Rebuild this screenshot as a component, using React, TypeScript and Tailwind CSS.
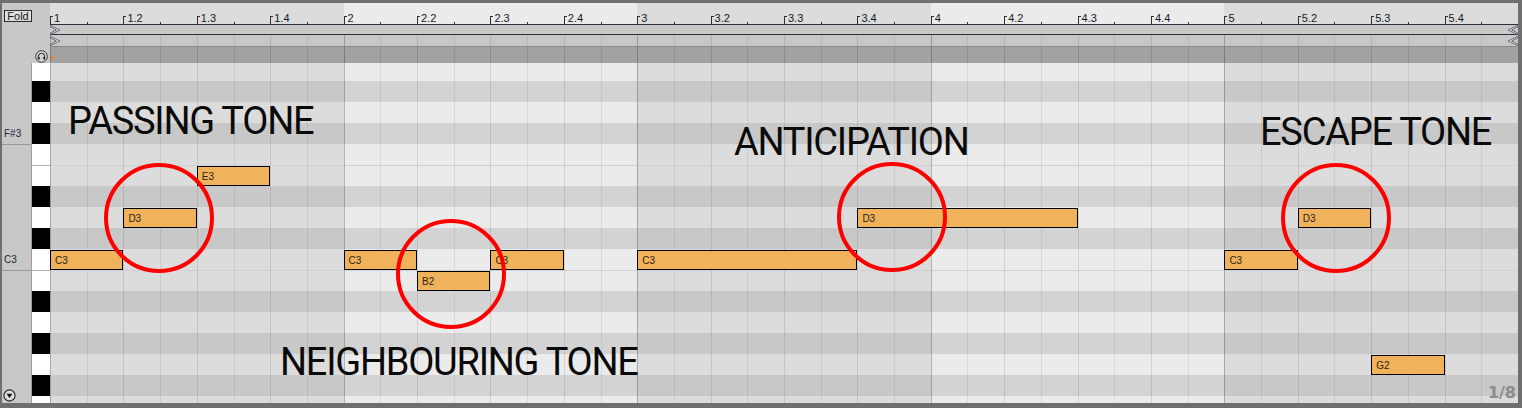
const EIGHTH = 293.6 / 8;

type Key = { n: string; b: boolean; label?: boolean; cut?: boolean; gap?: boolean };

// visible pitch rows, top to bottom (first row is partly hidden)
const KEYS: Key[] = [
  { n: "A3", b: false },
  { n: "G#3", b: true },
  { n: "G3", b: false },
  { n: "F#3", b: true, label: true },
  { n: "F3", b: false, cut: true },
  { n: "E3", b: false, gap: true },
  { n: "D#3", b: true },
  { n: "D3", b: false },
  { n: "C#3", b: true },
  { n: "C3", b: false, label: true },
  { n: "B2", b: false, gap: true, cut: true },
  { n: "A#2", b: true },
  { n: "A2", b: false },
  { n: "G#2", b: true },
  { n: "G2", b: false },
  { n: "F#2", b: true },
  { n: "F2", b: false },
];

const NOTES = [
  { k: 9, bar: 0, at: 0, len: 2 },
  { k: 7, bar: 0, at: 2, len: 2 },
  { k: 5, bar: 0, at: 4, len: 2 },
  { k: 9, bar: 1, at: 0, len: 2 },
  { k: 10, bar: 1, at: 2, len: 2 },
  { k: 9, bar: 1, at: 4, len: 2 },
  { k: 9, bar: 2, at: 0, len: 6 },
  { k: 7, bar: 2, at: 6, len: 6 },
  { k: 9, bar: 4, at: 0, len: 2 },
  { k: 7, bar: 4, at: 2, len: 2 },
  { k: 14, bar: 4, at: 4, len: 2 },
];

const RINGS = [
  { x: 104, y: 163 },
  { x: 396, y: 219 },
  { x: 837, y: 162 },
  { x: 1281, y: 163 },
];

const TAGS = [
  { t: "PASSING TONE", x: 68, y: 102 },
  { t: "NEIGHBOURING TONE", x: 280, y: 343 },
  { t: "ANTICIPATION", x: 734, y: 123 },
  { t: "ESCAPE TONE", x: 1260, y: 113 },
];

const BARS = [1, 2, 3, 4, 5];

function Lines({ bar, beat, eighth }: { bar: string; beat: string; eighth: string }) {
  return (
    <div className="absolute inset-0 flex">
      {BARS.map((b) => (
        <div key={b} className="flex flex-1">
          {[0, 1, 2, 3, 4, 5, 6, 7].map((j) => (
            <div key={j} className={`flex-1 border-l ${j === 0 ? bar : j % 2 === 0 ? beat : eighth}`} />
          ))}
        </div>
      ))}
    </div>
  );
}

function Marker({ flip }: { flip?: boolean }) {
  return (
    <svg width="11" height="10" viewBox="0 0 11 10" className={flip ? "-scale-x-100" : ""}>
      <polygon points="0.5,0.5 10,5 0.5,9.5 0.5,8 6.5,5 0.5,2" fill="#f7f7f7" stroke="#4a4f5a" strokeWidth="0.8" />
    </svg>
  );
}

function Ruler() {
  return (
    <div className="flex h-[21px]">
      {BARS.map((b) => (
        <div key={b} className={`flex flex-1 ${b % 2 === 0 ? "bg-[#ebebeb]" : "bg-[#dcdcdc]"}`}>
          {[0, 1, 2, 3].map((q) => (
            <div key={q} className="relative flex-1 pl-[4px] pt-[10px] text-[11px] leading-[11px] text-[#141a28]">
              <span className="absolute bottom-0 left-0 h-[8px] w-px bg-[#2a2f3c]" />
              <span className="absolute left-0 top-[13px] h-px w-[3px] bg-[#2a2f3c]" />
              <span className="absolute bottom-0 left-1/2 h-[2px] w-px bg-[#2a2f3c]" />
              {q === 0 ? b : `${b}.${q + 1}`}
            </div>
          ))}
        </div>
      ))}
    </div>
  );
}

function BarColumn({ i }: { i: number }) {
  const light = i % 2 === 1;
  return (
    <div className="flex flex-1 flex-col">
      {KEYS.map((k) => (
        <div
          key={k.n}
          className={`h-[21px] shrink-0 ${k.gap ? "border-t border-[#d0d0d0]" : ""} ${
            k.b ? (light ? "bg-[#d3d3d3]" : "bg-[#c8c8c8]") : light ? "bg-[#ebebeb]" : "bg-[#dcdcdc]"
          }`}
        />
      ))}
    </div>
  );
}

export default function App() {
  return (
    <div className="relative flex h-[408px] w-[1522px] flex-col overflow-hidden bg-[#6f6f6f] pb-[5px] pl-[2px] pr-[4px] pt-[3px] font-['Liberation_Sans',sans-serif]">
      {/* header */}
      <div className="flex h-[60px] shrink-0">
        <div className="flex w-[48px] flex-col bg-[#c8c8c8]">
          <div className="ml-[2px] mt-[7px] flex h-[12px] w-[28px] items-center justify-center border border-[#2e2e2e] bg-[#dedede] text-[11px] leading-[10px] text-[#1a1a1a]">
            Fold
          </div>
          <svg width="13" height="13" viewBox="0 0 13 13" className="ml-[33px] mt-auto">
            <circle cx="6.5" cy="6.5" r="5.8" fill="#d4d4d4" stroke="#333" strokeWidth="1" />
            <path d="M3.4 8 V6.4 a3.1 3.1 0 0 1 6.2 0 V8" fill="none" stroke="#222" strokeWidth="1" />
            <rect x="2.8" y="6.8" width="1.9" height="2.8" rx="0.6" fill="#222" />
            <rect x="8.3" y="6.8" width="1.9" height="2.8" rx="0.6" fill="#222" />
          </svg>
        </div>
        <div className="flex flex-1 flex-col">
          <Ruler />
          <div className="flex h-[11px] items-center justify-between border-y border-[#2c3140] bg-[#c9c9c9]">
            <Marker />
            <Marker flip />
          </div>
          <div className="relative flex h-[12px] items-center justify-between border-b border-[#8a8a8a] bg-[#c7c7c7]">
            <Lines bar="border-[#9a9a9a]" beat="border-[#b2b2b2]" eighth="border-[#b8b8b8]" />
            <div className="relative"><Marker /></div>
            <div className="relative"><Marker flip /></div>
          </div>
          <div className="relative h-[16px] bg-[#a2a2a2]">
            <Lines bar="border-[#7c7c7c]" beat="border-[#8c8c8c]" eighth="border-[#929292]" />
            <svg width="5" height="5" viewBox="0 0 5 5" className="absolute bottom-[1px] left-[1px]">
              <polygon points="0,0 4,0 0,4" fill="#f07c1e" />
            </svg>
          </div>
        </div>
      </div>

      {/* roll */}
      <div className="flex h-[340px] shrink-0 overflow-hidden">
        <div className="relative w-[30px] border-r border-[#9f9f9f] bg-[#c8c8c8]">
          <div className="-mt-[3px] flex flex-col">
            {KEYS.map((k) => (
              <div
                key={k.n}
                className={`flex h-[21px] shrink-0 items-center pl-[2px] text-[10px] text-[#1f2636] ${k.cut ? "border-t border-[#999]" : ""}`}
              >
                {k.label ? k.n : ""}
              </div>
            ))}
          </div>
          <svg width="13" height="13" viewBox="0 0 13 13" className="absolute bottom-[1px] left-[1px]">
            <circle cx="6.5" cy="6.5" r="5.6" fill="#dcdcdc" stroke="#222" strokeWidth="1.1" />
            <polygon points="3.6,4.8 9.4,4.8 6.5,9" fill="#111" />
          </svg>
        </div>

        <div className="w-[18px]">
          <div className="-mt-[3px] flex flex-col">
            {KEYS.map((k) => (
              <div
                key={k.n}
                className={`h-[21px] shrink-0 ${k.b ? "bg-black" : "bg-white"} ${k.gap ? "border-t border-[#b4b4b4]" : ""}`}
              />
            ))}
          </div>
        </div>

        <div className="relative flex-1 overflow-hidden">
          <div className="-mt-[3px] flex">
            {BARS.map((b, i) => (
              <BarColumn key={b} i={i} />
            ))}
          </div>
          <Lines bar="border-black/[0.24]" beat="border-black/[0.1]" eighth="border-black/[0.07]" />
          {NOTES.map((n, i) => (
            <div
              key={i}
              className="absolute flex h-[20px] items-center border border-black bg-[#f1b25c] pl-[4px] text-[10px] text-[#2a2416]"
              style={{
                left: (n.bar * 8 + n.at) * EIGHTH,
                width: n.len * EIGHTH,
                top: n.k * 21 - 2,
              }}
            >
              {KEYS[n.k].n}
            </div>
          ))}
          <div className="absolute bottom-[2px] right-[2px] font-['DejaVu_Sans',sans-serif] text-[16px] font-bold leading-[16px] text-[#8c8c8c]">
            1/8
          </div>
        </div>
      </div>

      {RINGS.map((r, i) => (
        <div
          key={i}
          className="absolute h-[110px] w-[110px] rounded-full border-[4.5px] border-[#ff0000]"
          style={{ left: r.x, top: r.y }}
        />
      ))}
      {TAGS.map((t) => (
        <div
          key={t.t}
          className="absolute whitespace-nowrap font-['Roboto',sans-serif] text-[38px] leading-none tracking-[-1.25px] text-[#0a0a0a]"
          style={{ left: t.x, top: t.y }}
        >
          {t.t}
        </div>
      ))}
    </div>
  );
}
